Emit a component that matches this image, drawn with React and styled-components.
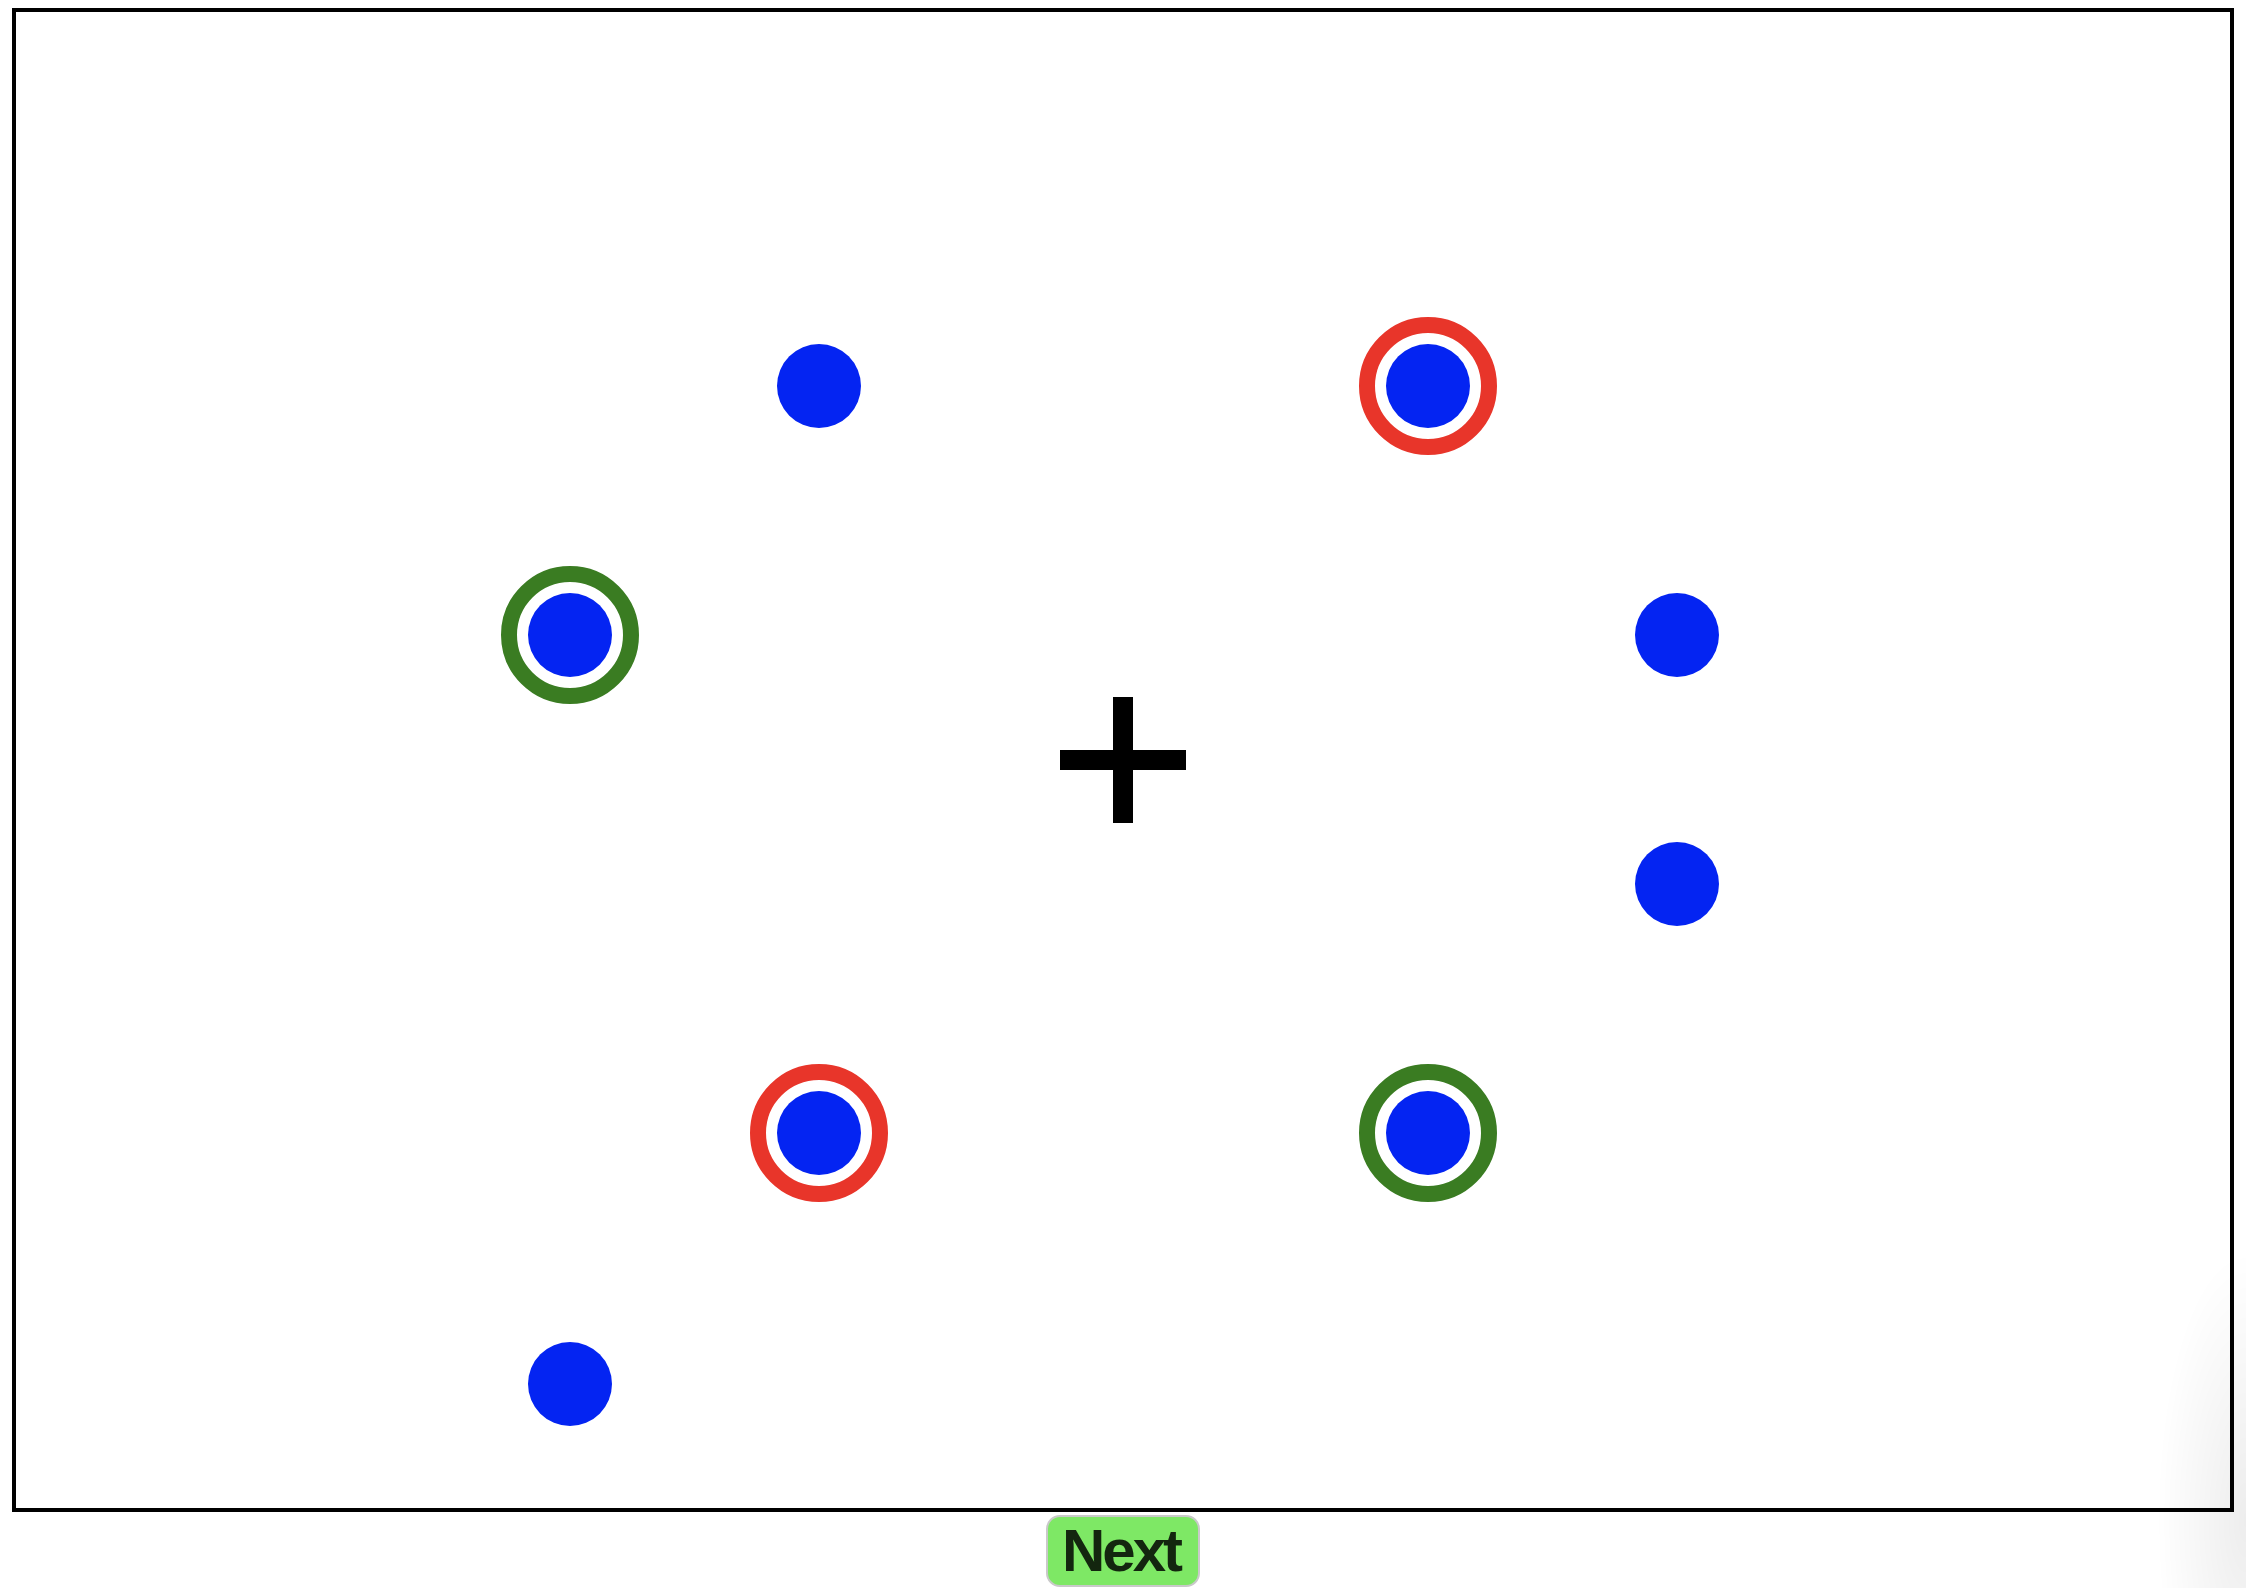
import React from 'react';
import styled, { createGlobalStyle } from 'styled-components';

const GlobalStyle = createGlobalStyle`
  html, body {
    margin: 0;
    padding: 0;
    background: #ffffff;
    font-family: "Liberation Sans", Arial, sans-serif;
  }
`

const Page = styled.div`
  display: flex;
  flex-direction: column;
  align-items: center;
  width: 2222px;
  padding: 8px 0 0 12px;
`

const Canvas = styled.div`
  position: relative;
  box-sizing: border-box;
  width: 2222px;
  height: 1504px;
  border: 4px solid #000;
  background: #fff;
`

// a target drawn on the free canvas, placed by its centre
const Marker = styled.svg`
  position: absolute;
  width: 140px;
  height: 140px;
  margin-left: -70px;
  margin-top: -70px;
  overflow: visible;
`

const NextButton = styled.button`
  margin-top: 3px;
  width: 154px;
  height: 72px;
  padding: 0 4px 0 0;
  border: 2px solid #c9c9c9;
  border-radius: 14px;
  background: #7ee865;
  color: #13260f;
  font-family: "Liberation Sans", Arial, sans-serif;
  font-weight: 700;
  font-size: 60px;
  letter-spacing: -3px;
  line-height: 1;
  cursor: pointer;
`

const CornerShade = styled.div`
  position: fixed;
  right: 0;
  bottom: 0;
  width: 90px;
  height: 340px;
  pointer-events: none;
  background: radial-gradient(ellipse at 100% 80%, rgba(0,0,0,0.07), rgba(0,0,0,0) 70%);
`

const BLUE = '#0424f2'
const RED = '#e8352a'
const GREEN = '#3a7c22'

// centres in page pixels, canvas inner box starts at (16, 12)
const targets = [
  { x: 819, y: 386 },
  { x: 1428, y: 386, ring: RED },
  { x: 570, y: 635, ring: GREEN },
  { x: 1677, y: 635 },
  { x: 1677, y: 884 },
  { x: 819, y: 1133, ring: RED },
  { x: 1428, y: 1133, ring: GREEN },
  { x: 570, y: 1384 },
]

function Target({ x, y, ring }) {
  return (
    <Marker viewBox="0 0 140 140" style={{ left: x - 16, top: y - 12 }}>
      {ring && <circle cx="70" cy="70" r="61" fill="none" stroke={ring} strokeWidth="16" />}
      <circle cx="70" cy="70" r="42" fill={BLUE} />
    </Marker>
  )
}

export default function App() {
  return (
    <>
      <GlobalStyle />
      <Page>
        <Canvas>
          {targets.map((t, i) => (
            <Target key={i} {...t} />
          ))}
          <Marker viewBox="0 0 140 140" style={{ left: 1123 - 16, top: 760 - 12 }}>
            <rect x="60" y="7" width="20" height="126" fill="#000" />
            <rect x="7" y="60" width="126" height="20" fill="#000" />
          </Marker>
        </Canvas>
        <NextButton>Next</NextButton>
      </Page>
      <CornerShade />
    </>
  )
}
